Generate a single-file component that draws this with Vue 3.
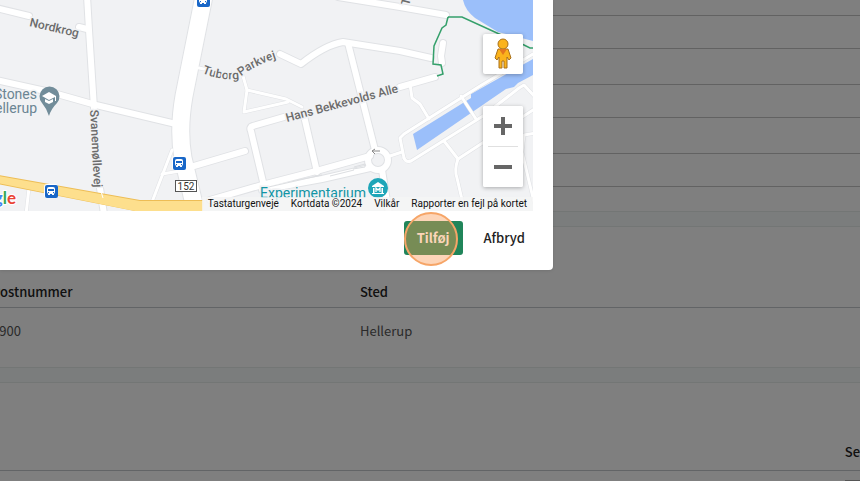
<template>
  <div class="page">
    <section class="panel panel-form">
      <div
        v-for="(size, index) in formRows"
        :key="index"
        class="form-row"
        :class="size"
      ></div>
    </section>

    <section class="panel panel-address">
      <table class="address-table">
        <thead>
          <tr>
            <th class="col-zip" scope="col">Postnummer</th>
            <th scope="col">Sted</th>
          </tr>
        </thead>
        <tbody>
          <tr v-for="row in addresses" :key="row.zip">
            <td>{{ row.zip }}</td>
            <td>{{ row.city }}</td>
          </tr>
        </tbody>
      </table>
    </section>

    <section class="panel panel-last">
      <div class="last-head">Se</div>
      <div class="last-body"><span class="last-box"></span></div>
    </section>

    <div class="overlay">
      <div class="dialog" role="dialog" aria-modal="true">
        <div class="map">
          <svg class="map-canvas" viewBox="0 0 533 211" preserveAspectRatio="xMaxYMin slice">
            <defs>
              <path id="tuborg" d="M202 73 Q222 81 238 79 Q255 64 284 56" />
              <g id="bus">
                <rect x="-7" y="-7" width="14" height="14" rx="3" fill="#fff" />
                <rect x="-6" y="-6" width="13" height="13" rx="2" fill="#1967c8" />
                <rect x="-4" y="-4" width="8" height="7" rx="2" fill="#fff" />
                <rect x="-3" y="-2" width="6" height="2" fill="#1967c8" />
                <path d="M-3 3h2v1h-2zM1 3h2v1h-2z" fill="#fff" />
                <path d="M-3 1h1v1h-1zM2 1h1v1h-1z" fill="#1967c8" />
              </g>
            </defs>

            <!-- water -->
            <path class="water" d="M463 0 Q465 10 475 18 L498 32 L533 41 V0Z" />
            <path class="water" d="M413 134 L471 98 L471 94 L533 59 V75 L518 83 L514 87 L506 89 L417 150Z" />

            <!-- roads: outline pass first, then the white fill -->
            <g v-for="pass in ['edge', 'fill']" :key="pass" class="roads" :class="pass">
              <path v-for="(d, index) in thinRoads" :key="'t' + index" class="thin" :d="d" />
              <path v-for="(d, index) in roads" :key="'r' + index" class="normal" :d="d" />
              <circle class="normal" cx="378" cy="160" r="10" />
              <path class="main" d="M204 -4 L184 96 Q178 130 183 158 L194 204" />
            </g>
            <path class="divider" d="M264 188 L322 175 M330 176 L354 170 M354 167 L365 164 V167 L353 169" />

            <!-- highway -->
            <path class="highway-edge" d="M-2 175 L140 200 H203 V212 H140 L-2 184Z" />
            <path class="highway" d="M-2 176 L140 201 H203 V212 H140 L-2 183Z" />
            <path class="thin-over" d="M100 188 L103 198 M153 200 L156 194" />

            <!-- footpath along the shore -->
            <path class="footpath" d="M448 17 H462 L497 33 L524 45 L530 48 H533 M448 17 L446 25 L442 28 L434 46 L433 64 L441 65 L443 74 L437 76" />

            <g class="label street">
              <text transform="translate(29 26) rotate(13)">Nordkrog</text>
              <text><textPath href="#tuborg">Tuborg Parkvej</textPath></text>
              <text transform="translate(287 122) rotate(-15)">Hans Bekkevolds Alle</text>
              <text transform="translate(90 110) rotate(87)">Svanemøllevej</text>
              <text transform="translate(409 6) rotate(-75)">T</text>
            </g>
            <g class="label school" text-anchor="end">
              <text x="37" y="99">Stones</text>
              <text x="37" y="113">Hellerup</text>
            </g>
            <text class="label museum" x="260" y="198">Experimentarium</text>

            <path d="M49 116 Q47 109 42 103 A10 10 0 1 1 57 103 Q51 109 49 116Z" fill="#728d9a" />
            <path d="M42 96 L49 92 L56 96 V101 H55 V97 L49 100Z M45 99 L49 101 L53 99 V102 L49 104 L45 102Z" fill="#fff" />

            <circle cx="378" cy="188" r="10" fill="#1fa6b8" />
            <path d="M372 186 L378 182 L384 186 V187 H372Z M373 188h1.5v5h-1.5z M381.500 188h1.500v5h-1.500z M372 193h12v1h-12z" fill="#fff" />
            <path d="M376 192 V188 L378 190 L380 188 V192" fill="none" stroke="#fff" stroke-width="1.300" />
            <path d="M380 151 H372 M375 149 L372 151 L375 154" fill="none" stroke="#888" />

            <use href="#bus" x="203" y="0" />
            <use href="#bus" x="179" y="163" />
            <use href="#bus" x="51" y="191" />

            <rect x="175.500" y="180.500" width="21" height="11" fill="#fff" stroke="#555" />
            <text class="shield" x="186" y="190" text-anchor="middle">152</text>

            <text class="google" x="16" y="204" text-anchor="end">
              <tspan fill="#4285f4">g</tspan><tspan fill="#34a853">l</tspan><tspan fill="#ea4335">e</tspan>
            </text>
          </svg>

          <div class="map-controls">
            <button type="button" class="map-button pegman" aria-label="Street View">
              <svg width="20" height="32" viewBox="0 0 20 32">
                <g fill="#fbb31c" stroke="#a8701a">
                  <path d="M5 11 H15 L18 20 L16 22 L14 19 V30 H11 V23 H9 V30 H6 V19 L4 22 L2 20Z" />
                  <circle cx="10" cy="6" r="5" />
                </g>
                <path d="M6 11 H14 L10 17Z" fill="#e5771e" />
              </svg>
            </button>
            <div class="zoom-group">
              <button type="button" class="map-button" aria-label="Zoom ind">
                <svg width="18" height="18" viewBox="0 0 18 18">
                  <path d="M7 0h4v7h7v4h-7v7H7v-7H0V7h7z" fill="#666" />
                </svg>
              </button>
              <span class="zoom-line"></span>
              <button type="button" class="map-button" aria-label="Zoom ud">
                <svg width="18" height="18" viewBox="0 0 18 18">
                  <path d="M0 7h18v4H0z" fill="#666" />
                </svg>
              </button>
            </div>
          </div>

          <div class="attribution">
            <button type="button" class="shortcut">Tastaturgenveje</button>
            <span>Kortdata ©2024</span>
            <a href="#">Vilkår</a>
            <a href="#">Rapporter en fejl på kortet</a>
          </div>
        </div>

        <div class="actions">
          <button type="button" class="btn btn-primary">
            Tilføj
            <span class="click-marker"></span>
          </button>
          <button type="button" class="btn">Afbryd</button>
        </div>
      </div>
    </div>
  </div>
</template>

<script setup>
const formRows = ['first', 'short', 'tall', 'short', 'tall', 'short']

const addresses = [{ zip: '2900', city: 'Hellerup' }]

const roads = [
  'M-4 8 L29 16',
  'M79 27 L87 29',
  'M87 -4 L89 30 L94 108',
  'M100 188 L104 214',
  'M-4 80 L50 92 L96 105 L176 124',
  'M338 -3 L400 7 L446 15',
  'M280 54 L301 64 Q325 45 343 42 L400 51 L431 58',
  'M348 43 L375 150',
  'M284 117 L253 126 Q249 127 251 131 L264 186',
  'M400 87 L435 77',
  'M304 116 L317 172',
  'M194 166 L245 151',
  'M210 200 L262 185 L320 170 L370 156',
  'M262 190 L322 179 L370 168',
  'M382 170 L389 214',
  'M443 43 L441 56 L442 63'
]

const thinRoads = [
  'M199 68 L204 69',
  'M243 76 L247 90 L244 112 L288 102',
  'M247 90 L286 99 L302 107',
  'M152 202 L172 150',
  'M162 174 L180 171',
  'M29 188 L26 214',
  'M390 156 L402 152',
  'M410 84 L412 98 L420 104 L429 119',
  'M404 158 L400 138 L404 134 L480 86 L533 54',
  'M404 158 Q406 163 411 161 L483 116 L519 88 L524 85 L536 98',
  'M461 96 L476 119',
  'M444 141 L458 159 L536 108',
  'M458 159 Q454 170 457 178 L463 204',
  'M536 133 L524 135 L522 152 L534 202'
]
</script>

<style>
body {
  margin: 0;
}
</style>

<style scoped>
.page {
  position: relative;
  min-height: 100vh;
  overflow: hidden;
  background: #f7fbfa;
  font-family: "Noto Sans CJK SC", "Noto Sans", sans-serif;
  font-size: 13px;
  line-height: 20px;
  color: #333;
}

.panel {
  background: #fff;
  border-bottom: 1px solid #e6ecea;
}

.panel + .panel {
  margin-top: 14px;
  border-top: 1px solid #e6ecea;
}

.panel-form {
  padding-bottom: 24px;
}

.form-row {
  box-sizing: border-box;
  border-bottom: 1px solid #c4c4c4;
}

.form-row.first {
  height: 16px;
}

.form-row.short {
  height: 33px;
}

.form-row.tall {
  height: 36px;
}

.panel-address {
  padding: 49px 0 26px;
}

/* the table is scrolled slightly past the left edge */
.address-table {
  width: calc(100% + 8px);
  margin-left: -8px;
  border-collapse: collapse;
  table-layout: fixed;
}

.address-table th,
.address-table td {
  padding: 0;
  text-align: left;
}

.address-table th {
  height: 31px;
  border-bottom: 1px solid #c4c8cc;
  font-weight: 500;
  color: #222;
  vertical-align: middle;
}

.address-table td {
  height: 33px;
  color: #555;
  vertical-align: bottom;
}

.address-table .col-zip {
  width: 368px;
}

.panel-last {
  border-bottom: none;
}

.last-head {
  padding: 59px 0 8px;
  border-bottom: 1px solid #c4c8cc;
  text-align: right;
  font-weight: 500;
  color: #222;
}

.last-body {
  display: flex;
  justify-content: flex-end;
  height: 10px;
  padding-top: 9px;
  overflow: hidden;
  box-sizing: border-box;
}

.last-box {
  width: 15px;
  height: 20px;
  border-top: 1px solid #aaa;
}

.overlay {
  position: absolute;
  inset: 0;
  display: grid;
  grid-template-columns: 553fr 307fr;
  align-items: start;
  background: rgba(0, 0, 0, 0.5);
}

.dialog {
  padding-right: 20px;
  background: #fff;
  border-radius: 0 0 4px 0;
  box-shadow: 0 1px 3px rgba(0, 0, 0, 0.1);
}

.map {
  position: relative;
  height: 211px;
  overflow: hidden;
  background: #f1f2f4;
}

.map-canvas {
  display: block;
  width: 100%;
  height: 100%;
}

.water {
  fill: #9bbffa;
}

.roads path,
.roads circle {
  fill: none;
  stroke-linejoin: round;
  stroke-linecap: round;
}

.edge {
  stroke: #e0e2e5;
}

.edge .thin {
  stroke-width: 4px;
}

.edge .normal {
  stroke-width: 8px;
}

.edge .main {
  stroke-width: 19px;
}

.fill {
  stroke: #fff;
}

.fill .thin {
  stroke-width: 3px;
}

.fill .normal {
  stroke-width: 6px;
}

.fill .main {
  stroke-width: 17px;
}

.divider {
  fill: none;
  stroke: #dcdee1;
}

.highway-edge {
  fill: #edbd55;
}

.highway {
  fill: #fddf8d;
}

.thin-over {
  fill: none;
  stroke: #fff;
  stroke-width: 1px;
}

.footpath {
  fill: none;
  stroke: #35a06b;
  stroke-width: 1.5px;
}

.label {
  font-family: Roboto, sans-serif;
  stroke: #f1f2f4;
  stroke-width: 3px;
  paint-order: stroke;
}

.street {
  font-size: 12px;
  font-weight: 500;
  fill: #6b6b6b;
}

.school {
  font-size: 14px;
  fill: #6b8593;
}

.museum {
  font-size: 14px;
  fill: #1295a5;
}

.shield {
  font-family: Roboto, sans-serif;
  font-size: 10px;
  fill: #333;
}

.google {
  font-family: Lato, sans-serif;
  font-size: 17px;
  font-weight: 700;
  stroke: #fff;
  stroke-width: 2px;
  paint-order: stroke;
}

.map-controls {
  position: absolute;
  top: 34px;
  right: 10px;
  display: flex;
  flex-direction: column;
  gap: 32px;
}

.map-button {
  display: flex;
  align-items: center;
  justify-content: center;
  width: 40px;
  height: 40px;
  padding: 0;
  border: none;
  border-radius: 2px;
  background: #fff;
  cursor: pointer;
}

.pegman,
.zoom-group {
  box-shadow: 0 1px 4px rgba(0, 0, 0, 0.3);
}

.zoom-group {
  border-radius: 2px;
  background: #fff;
}

.zoom-line {
  display: block;
  height: 1px;
  margin: 0 5px;
  background: #e0e0e0;
}

.attribution {
  position: absolute;
  right: 0;
  bottom: 0;
  display: flex;
  gap: 12px;
  padding: 0 6px;
  background: rgba(245, 245, 245, 0.8);
  font-family: Roboto, sans-serif;
  font-size: 10px;
  line-height: 14px;
  color: #111;
  white-space: nowrap;
}

.attribution a {
  color: inherit;
  text-decoration: none;
}

.shortcut {
  padding: 0;
  border: none;
  background: none;
  font: inherit;
  color: inherit;
  cursor: pointer;
}

.actions {
  display: flex;
  justify-content: flex-end;
  gap: 8px;
  margin-right: -5px;
  padding: 10px 0 15px;
}

.btn {
  position: relative;
  height: 34px;
  padding: 0 13px;
  border: none;
  border-radius: 3px;
  background: none;
  font: inherit;
  font-weight: 500;
  color: #222;
  cursor: pointer;
}

.btn-primary {
  background: #20855a;
  font-weight: 700;
  color: #fff;
}

.click-marker {
  position: absolute;
  top: -9px;
  left: 0;
  box-sizing: border-box;
  width: 54px;
  height: 54px;
  border: 2px solid #f6a567;
  border-radius: 50%;
  background: rgba(250, 150, 77, 0.4);
}
</style>
